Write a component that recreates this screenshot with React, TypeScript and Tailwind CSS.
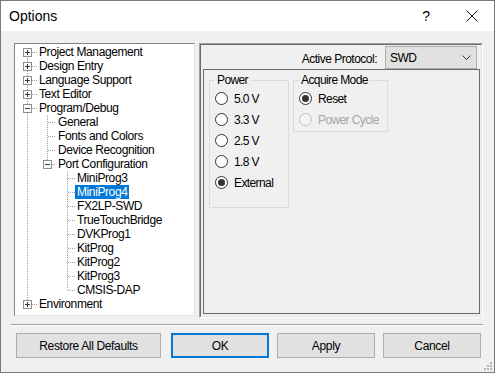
import React from 'react';

type Row = { t: string; lvl: number; box?: '+' | '-'; first?: boolean; last?: boolean; sel?: boolean };

const rows: Row[] = [
  { t: 'Project Management', lvl: 0, box: '+', first: true },
  { t: 'Design Entry', lvl: 0, box: '+' },
  { t: 'Language Support', lvl: 0, box: '+' },
  { t: 'Text Editor', lvl: 0, box: '+' },
  { t: 'Program/Debug', lvl: 0, box: '-' },
  { t: 'General', lvl: 1 },
  { t: 'Fonts and Colors', lvl: 1 },
  { t: 'Device Recognition', lvl: 1 },
  { t: 'Port Configuration', lvl: 1, box: '-', last: true },
  { t: 'MiniProg3', lvl: 2 },
  { t: 'MiniProg4', lvl: 2, sel: true },
  { t: 'FX2LP-SWD', lvl: 2 },
  { t: 'TrueTouchBridge', lvl: 2 },
  { t: 'DVKProg1', lvl: 2 },
  { t: 'KitProg', lvl: 2 },
  { t: 'KitProg2', lvl: 2 },
  { t: 'KitProg3', lvl: 2 },
  { t: 'CMSIS-DAP', lvl: 2, last: true },
  { t: 'Environment', lvl: 0, box: '+', last: true },
];

// guide columns and indent widths, in tree-local px
const COL = [12, 32, 52];
const IND = [22, 41, 60];

function TreeLines({ r }: { r: Row }) {
  const c = COL[r.lvl];
  const w = IND[r.lvl];
  return (
    <svg width={w} height={14} className="shrink-0" shapeRendering="crispEdges">
      <g stroke="#a0a0a0" strokeDasharray="1 1">
        {r.lvl > 0 && <line x1={COL[0] + 0.5} y1={0} x2={COL[0] + 0.5} y2={14} />}
        <line x1={c + 0.5} y1={r.first ? 7 : 0} x2={c + 0.5} y2={r.last ? 7 : 14} />
        <line x1={c + 1} y1={7.5} x2={w} y2={7.5} />
      </g>
      {r.box && (
        <g>
          <rect x={c - 3.5} y={3.5} width={8} height={8} fill="#fbfbfb" stroke="#8e8f8f" />
          <line x1={c - 2} y1={7.5} x2={c + 3} y2={7.5} stroke="#2b3a55" />
          {r.box === '+' && <line x1={c + 0.5} y1={5} x2={c + 0.5} y2={10} stroke="#2b3a55" />}
        </g>
      )}
    </svg>
  );
}

function Radio({ label, on, disabled }: { label: string; on?: boolean; disabled?: boolean }) {
  return (
    <div className="flex items-center h-[21px]">
      <span
        className={`w-[13px] h-[13px] rounded-full border flex items-center justify-center ${
          disabled ? 'border-[#c4c4c4] bg-[#f4f4f4]' : 'border-[#333333] bg-white'
        }`}
      >
        {on && <span className="w-[7px] h-[7px] rounded-full bg-[#333333]" />}
      </span>
      <span className={`ml-[6px] ${disabled ? 'text-[#a6a6a6]' : 'text-black'}`}>{label}</span>
    </div>
  );
}

function Btn({ label, w, def }: { label: string; w: string; def?: boolean }) {
  return (
    <div
      className={`${w} h-[25px] flex items-center justify-center bg-[#e1e1e1] ${
        def ? 'border-2 border-[#0078d7]' : 'border border-[#adadad]'
      }`}
    >
      {label}
    </div>
  );
}

export default function App() {
  return (
    <div className="relative w-[495px] h-[373px] border border-[#7a7a7a] flex flex-col bg-[#f0f0f0] font-['Liberation_Sans',Arial,sans-serif] text-[12px] text-black">
      {/* title bar */}
      <div className="h-[30px] bg-white flex items-center pl-[8px]">
        <span className="text-[14px]">Options</span>
        <span className="ml-auto text-[14px] mr-[36px]">?</span>
        <svg width="12" height="12" className="mr-[16px]" viewBox="0 0 12 12">
          <path d="M0.5 0.5 L11.5 11.5 M11.5 0.5 L0.5 11.5" stroke="#111" strokeWidth="1" fill="none" />
        </svg>
      </div>

      <div className="flex-1 flex flex-col pt-[12px]">
        <div className="flex items-start pl-[13px]">
          {/* tree */}
          <div className="w-[181px] h-[273px] pt-[1px] bg-white border border-t-[#828282] border-l-[#828282] border-r-[#e3e3e3] border-b-[#e3e3e3] tracking-[-0.4px]">
            {rows.map((r) => (
              <div key={r.t} className="flex h-[14px] leading-[14px]">
                <TreeLines r={r} />
                <span className={`px-[2px] whitespace-nowrap ${r.sel ? 'bg-[#0078d7] text-white' : ''}`}>{r.t}</span>
              </div>
            ))}
          </div>

          {/* options page */}
          <div className="ml-[4px] w-[284px] h-[275px] border border-t-[#a0a0a0] border-l-[#a0a0a0] border-r-white border-b-white">
            <div className="h-full flex flex-col border border-t-[#696969] border-l-[#696969] border-r-[#e3e3e3] border-b-[#e3e3e3]">
              <div className="h-[24px] flex items-start justify-end pr-[4px] tracking-[-0.5px]">
                <span className="mt-[5px] mr-[8px]">Active Protocol:</span>
                <div className="mt-[1px] w-[92px] h-[23px] bg-[#e1e1e1] border border-[#adadad] flex items-center pl-[4px] pr-[5px]">
                  <span>SWD</span>
                  <svg width="9" height="5" viewBox="0 0 9 5" className="ml-auto">
                    <path d="M0.5 0.5 L4.5 4.5 L8.5 0.5" stroke="#333" fill="none" />
                  </svg>
                </div>
              </div>
              <div className="flex-1 ml-[2px] mr-[1px] mb-[2px] border border-[#6a6a6a] pt-[3px] pl-[5px] flex items-start gap-[4px] tracking-[-0.6px]">
                <fieldset className="w-[80px] border border-[#dcdcdc] pl-[5px] pb-[14px]">
                  <legend className="px-[2px] leading-[15px]">Power</legend>
                  <Radio label="5.0 V" />
                  <Radio label="3.3 V" />
                  <Radio label="2.5 V" />
                  <Radio label="1.8 V" />
                  <Radio label="External" on />
                </fieldset>
                <fieldset className="w-[95px] border border-[#dcdcdc] pl-[5px] pb-[1px]">
                  <legend className="px-[2px] leading-[15px]">Acquire Mode</legend>
                  <Radio label="Reset" on />
                  <Radio label="Power Cycle" disabled />
                </fieldset>
              </div>
            </div>
          </div>
        </div>

        {/* separator */}
        <div className="mt-[6px] ml-[10px] w-[472px] h-[2px] border-t border-t-[#a0a0a0] border-b border-b-white" />

        {/* buttons */}
        <div className="mt-[7px] flex pl-[15px] tracking-[-0.35px]">
          <Btn label="Restore All Defaults" w="w-[145px]" />
          <div className="ml-[10px]">
            <Btn label="OK" w="w-[98px]" def />
          </div>
          <div className="ml-[8px]">
            <Btn label="Apply" w="w-[98px]" />
          </div>
          <div className="ml-[8px]">
            <Btn label="Cancel" w="w-[98px]" />
          </div>
        </div>
      </div>

      {/* resize grip */}
      <svg width="8" height="8" className="absolute right-[2px] bottom-[2px]" shapeRendering="crispEdges">
        <g fill="#b8b8b8">
          <rect x="6" y="0" width="2" height="2" />
          <rect x="3" y="3" width="2" height="2" />
          <rect x="6" y="3" width="2" height="2" />
          <rect x="0" y="6" width="2" height="2" />
          <rect x="3" y="6" width="2" height="2" />
          <rect x="6" y="6" width="2" height="2" />
        </g>
      </svg>
    </div>
  );
}
